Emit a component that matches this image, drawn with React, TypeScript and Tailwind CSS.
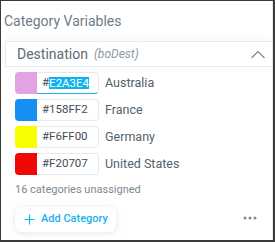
import React from "react";

const rows = [
  { color: "#E2A3E4", hex: "E2A3E4", label: "Australia", focused: true },
  { color: "#158FF2", hex: "158FF2", label: "France" },
  { color: "#F6FF00", hex: "F6FF00", label: "Germany" },
  { color: "#F20707", hex: "F20707", label: "United States" },
];

export default function App() {
  return (
    <div className="w-[275px] h-[242px] bg-white border-l border-t border-r-2 border-b-2 border-[#3a3a3a] box-border font-['Roboto',sans-serif] overflow-hidden">
      <div className="w-[272px] h-full border-r border-[#e6e9ec] flex flex-col">
        <div className="pl-[3px] pt-[10px] text-[14px] leading-[20px] text-[#6e7c87]">Category Variables</div>
        <div className="mt-[10px] ml-[4px] h-[26px] border-l border-t border-b border-[#e8ebee] flex items-center pl-[11px] pr-[6px] shadow-[0_-3px_6px_rgba(120,140,160,0.06)]">
          <span className="text-[14px] leading-[20px] text-[#5c6b77]">Destination</span>
          <span className="ml-[6px] text-[12px] leading-[20px] italic text-[#8d99a4]">(boDest)</span>
          <svg className="ml-auto mr-[1px]" width="14" height="9" viewBox="0 0 14 9">
            <polyline points="0.5,8 7,1.5 13.5,8" fill="none" stroke="#6f8499" strokeWidth="1.1" />
          </svg>
        </div>
        <div className="pl-[14px] pt-[5px] flex flex-col gap-[5px]">
          {rows.map((r) => (
            <div key={r.hex} className="flex items-center h-[22px]">
              <div className="flex h-[22px] w-[84px]">
                <div className="w-[22px] h-full rounded-l-[4px]" style={{ backgroundColor: r.color }} />
                <div
                  className={
                    "flex-1 h-full rounded-r-[4px] border-t border-r border-b flex items-center pl-[5px] text-[11.5px] text-[#3f4c57] " +
                    (r.focused ? "border-[#e6e9ec] border-b-[#19b2ec]" : "border-[#e6e9ec]")
                  }
                >
                  {r.focused ? (
                    <>
                      <span>#</span>
                      <span className="bg-[#0db1ee] text-white leading-[12px] py-[0px]">{r.hex}</span>
                    </>
                  ) : (
                    <span>#{r.hex}</span>
                  )}
                </div>
              </div>
              <span className="ml-[6px] text-[12.5px] text-[#53616c]">{r.label}</span>
            </div>
          ))}
        </div>
        <div className="pl-[14px] mt-[7px] text-[11px] leading-[16px] text-[#7c8893]">16 categories unassigned</div>
        <div className="pl-[14px] pr-[15px] mt-[9px] flex items-center justify-between">
          <button className="w-[101px] h-[25px] rounded-[6px] bg-white shadow-[0_1px_6px_rgba(90,110,130,0.18)] flex items-center pl-[9px]">
            <svg width="11" height="11" viewBox="0 0 11 11">
              <path d="M5.5 0.5v10M0.5 5.5h10" stroke="#1ab2ec" strokeWidth="1.2" fill="none" />
            </svg>
            <span className="ml-[6px] text-[11px] font-medium text-[#1ab2ec]">Add Category</span>
          </button>
          <svg className="mb-[4px]" width="14" height="4" viewBox="0 0 14 4">
            <circle cx="2" cy="2" r="1.5" fill="#7d8b96" />
            <circle cx="7" cy="2" r="1.5" fill="#7d8b96" />
            <circle cx="12" cy="2" r="1.5" fill="#7d8b96" />
          </svg>
        </div>
      </div>
    </div>
  );
}
